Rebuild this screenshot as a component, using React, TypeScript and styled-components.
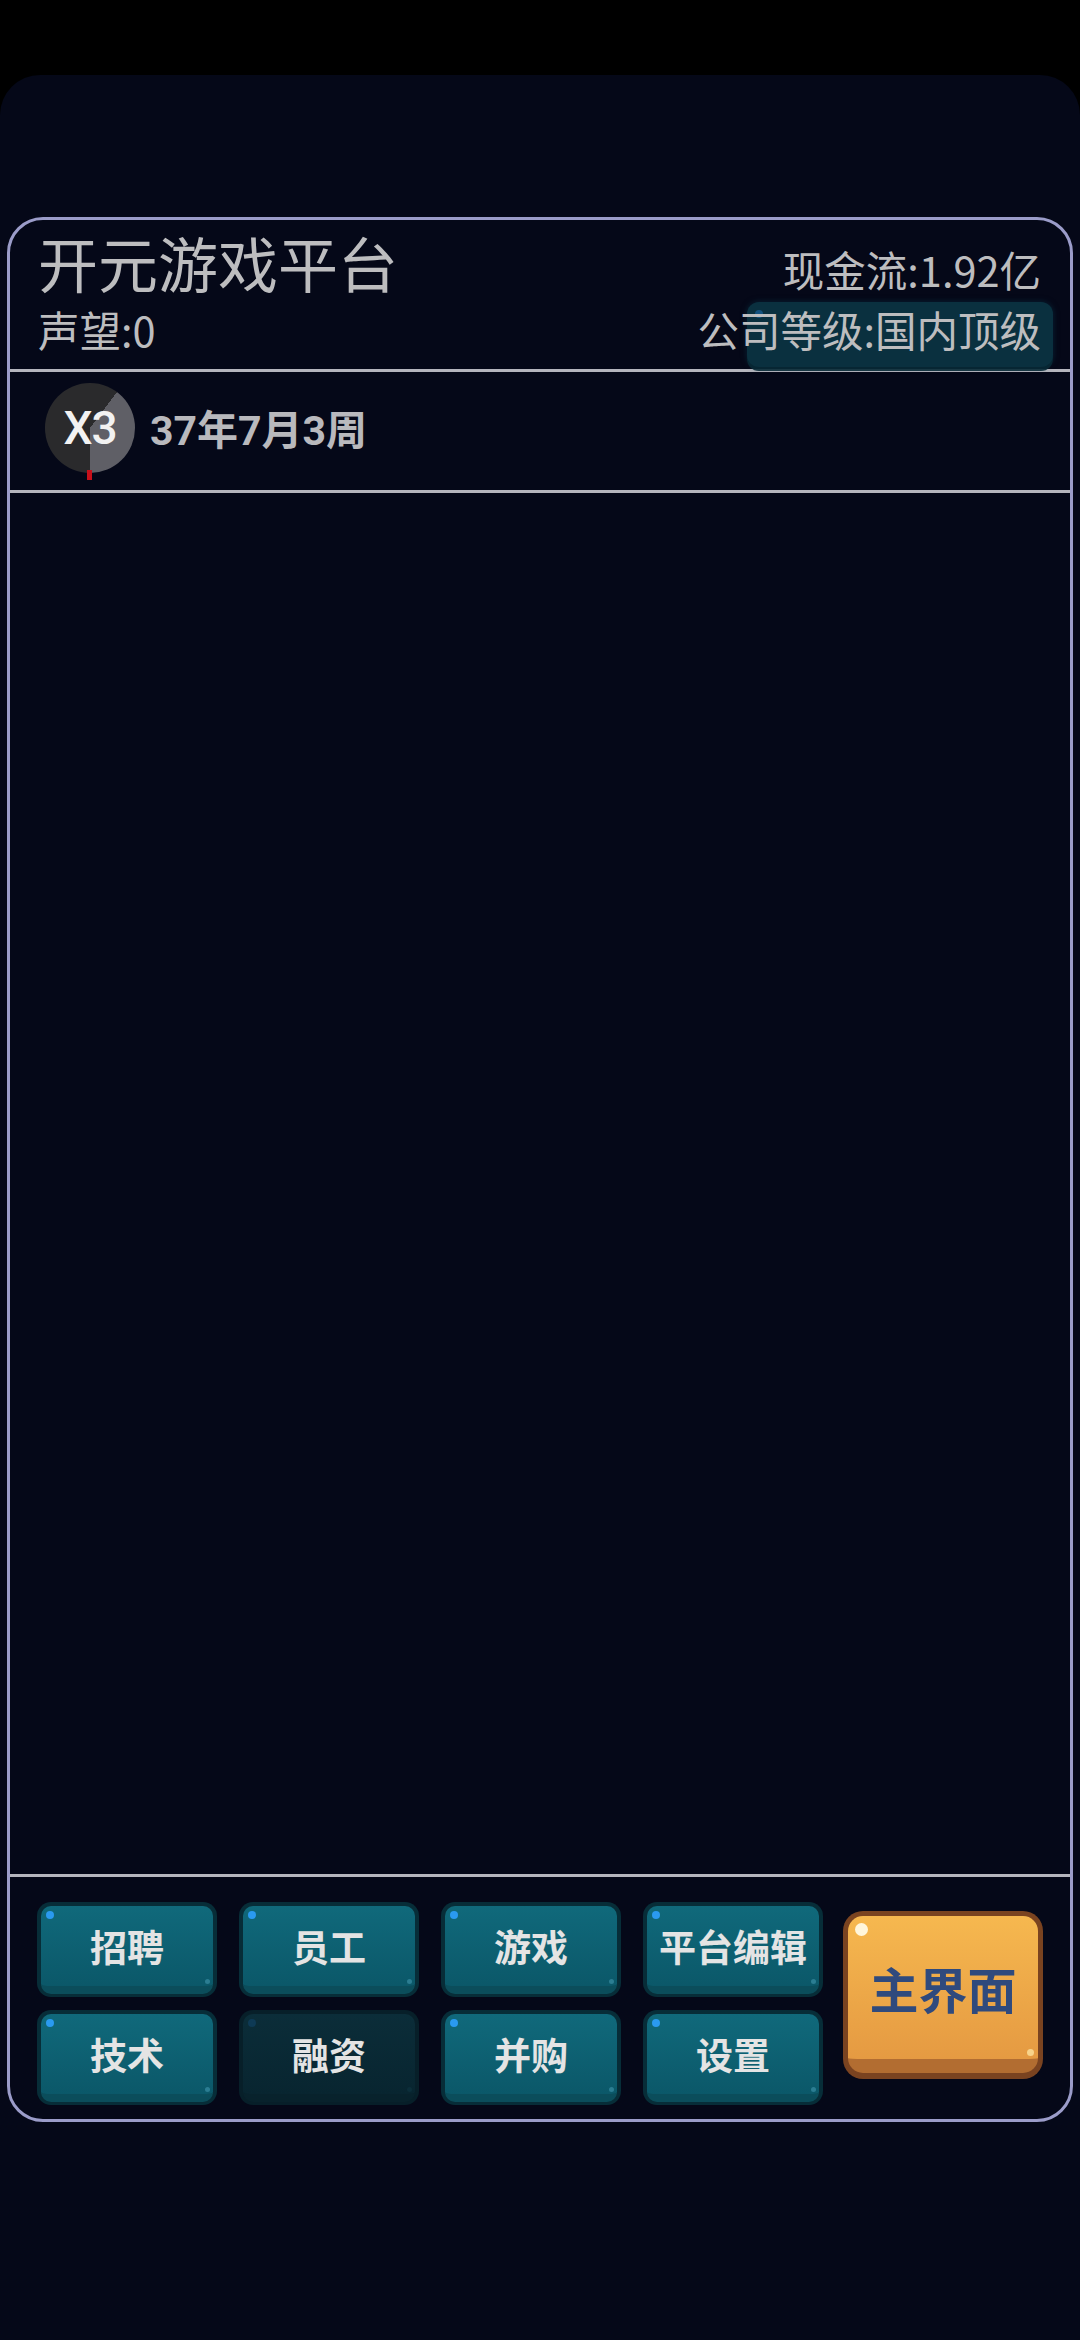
import React, { FC } from "react";
import styled, { createGlobalStyle } from "styled-components";

const GlobalStyle = createGlobalStyle`
  html, body {
    margin: 0;
    padding: 0;
    background: #000;
  }
  body {
    font-family: "Noto Sans CJK SC", "Noto Sans", sans-serif;
  }
`;

const Screen = styled.div`
  width: 1080px;
  min-height: 2340px;
  padding-top: 75px;
  box-sizing: border-box;
  background: #000;
`;

const Frame = styled.div`
  min-height: 2265px;
  box-sizing: border-box;
  background: #050818;
  border-radius: 40px 40px 0 0;
  padding: 142px 7px 0;
`;

const Panel = styled.div`
  height: 1905px;
  box-sizing: border-box;
  border: 3px solid #9b9cc9;
  border-radius: 36px;
  display: flex;
  flex-direction: column;
  overflow: hidden;
`;

const Header = styled.div`
  height: 149px;
  box-sizing: border-box;
  padding: 7px 29px 0 28px;
`;

const HeaderRow = styled.div<{ $height: number; $gap?: number }>`
  display: flex;
  justify-content: space-between;
  align-items: flex-end;
  height: ${({ $height }) => $height}px;
  margin-top: ${({ $gap }) => $gap ?? 0}px;
`;

const Title = styled.div`
  font-family: "Noto Sans CJK SC", sans-serif;
  font-size: 60px;
  line-height: 70px;
  height: 70px;
  color: #bdbdbf;
`;

const Stat = styled.div<{ $lift?: number }>`
  position: relative;
  font-family: "Noto Sans CJK SC", sans-serif;
  font-size: 41.5px;
  line-height: 48px;
  height: 48px;
  margin-bottom: ${({ $lift }) => $lift ?? 0}px;
  color: #bdbdbf;
  white-space: nowrap;
`;

const StatText = styled.span`
  position: relative;
  z-index: 1;
`;

/* faded button ghost sitting behind the company level */
const GhostButton = styled.div`
  position: absolute;
  left: 50px;
  right: -12px;
  top: -3px;
  bottom: -14px;
  border-radius: 12px;
  background: #0b3544;
  box-shadow: 0 4px 0 #082a36, 0 0 6px rgba(10, 60, 80, 0.6);
  opacity: 0.9;
  &::before {
    content: "";
    position: absolute;
    left: 8px;
    top: 8px;
    width: 8px;
    height: 8px;
    border-radius: 50%;
    background: #155a8a;
  }
`;

const Divider = styled.div`
  height: 3px;
  flex-shrink: 0;
  background: #b5b5bd;
`;

const TimeRow = styled.div`
  height: 118px;
  box-sizing: border-box;
  display: flex;
  align-items: center;
  gap: 15px;
  padding: 0 0 6px 35px;
`;

const SpeedDial = styled.div`
  position: relative;
  width: 90px;
  height: 90px;
  border-radius: 50%;
  background: conic-gradient(
    #2a2a2c 0deg 37deg,
    #5f5f66 37deg 180deg,
    #2a2a2c 180deg 360deg
  );
  display: flex;
  align-items: center;
  justify-content: center;
  font-family: Roboto, "Liberation Sans", sans-serif;
  font-size: 46px;
  font-weight: 500;
  color: #f2f2f2;
  letter-spacing: -1px;
  &::after {
    content: "";
    position: absolute;
    left: 42px;
    bottom: -7px;
    width: 5px;
    height: 10px;
    background: #c8101a;
  }
`;

const DateText = styled.div`
  font-family: Roboto, "Noto Sans CJK SC", sans-serif;
  font-weight: 700;
  font-size: 41px;
  line-height: 48px;
  color: #b9b9bd;
  margin-top: 6px;
`;

const Content = styled.div`
  flex: 1;
`;

const Footer = styled.div`
  display: flex;
  gap: 20px;
  padding: 25px 27px 14px 27px;
`;

const ButtonGrid = styled.div`
  display: grid;
  grid-template-columns: repeat(4, 180px);
  grid-auto-rows: 95px;
  column-gap: 22px;
  row-gap: 13px;
`;

const TealButton = styled.div<{ $disabled?: boolean }>`
  position: relative;
  box-sizing: border-box;
  padding: 4px 4px 3px;
  border-radius: 14px;
  background: ${({ $disabled }) => ($disabled ? "#071f29" : "#072d38")};
`;

const TealFace = styled.div<{ $disabled?: boolean }>`
  position: relative;
  height: 100%;
  box-sizing: border-box;
  border-radius: 10px;
  border-bottom: 8px solid ${({ $disabled }) => ($disabled ? "#08222c" : "#0b4d5b")};
  background: ${({ $disabled }) =>
    $disabled
      ? "linear-gradient(180deg, #0b2d39 0%, #082530 100%)"
      : "linear-gradient(180deg, #10697b 0%, #0b5869 100%)"};
  display: flex;
  align-items: center;
  justify-content: center;
  font-family: "Noto Sans CJK SC", sans-serif;
  font-weight: 700;
  font-size: 37px;
  color: #e4e4e4;
  &::before {
    content: "";
    position: absolute;
    left: 5px;
    top: 5px;
    width: 8px;
    height: 8px;
    border-radius: 50%;
    background: ${({ $disabled }) => ($disabled ? "#0e3a55" : "#2a9af0")};
  }
  &::after {
    content: "";
    position: absolute;
    right: 3px;
    bottom: 2px;
    width: 5px;
    height: 5px;
    border-radius: 50%;
    background: ${({ $disabled }) => ($disabled ? "#0c2e3a" : "#2b7d92")};
  }
`;

const MainButton = styled.div`
  width: 200px;
  height: 168px;
  margin-top: 9px;
  box-sizing: border-box;
  padding: 5px 5px 6px;
  border-radius: 20px;
  background: #7a4320;
`;

const MainFace = styled.div`
  position: relative;
  height: 100%;
  box-sizing: border-box;
  border-radius: 15px;
  border-bottom: 14px solid #b26d31;
  background: linear-gradient(180deg, #f6b84f 0%, #e59a42 100%);
  display: flex;
  align-items: center;
  justify-content: center;
  font-family: "Noto Sans CJK SC", sans-serif;
  font-weight: 700;
  font-size: 49px;
  color: #2f4a7d;
  &::before {
    content: "";
    position: absolute;
    left: 7px;
    top: 7px;
    width: 13px;
    height: 13px;
    border-radius: 50%;
    background: #fff6dc;
  }
  &::after {
    content: "";
    position: absolute;
    right: 4px;
    bottom: 3px;
    width: 7px;
    height: 7px;
    border-radius: 50%;
    background: #f8d38a;
  }
`;

const buttons = [
  { label: "招聘" },
  { label: "员工" },
  { label: "游戏" },
  { label: "平台编辑" },
  { label: "技术" },
  { label: "融资", disabled: true },
  { label: "并购" },
  { label: "设置" },
];

const App: FC = () => {
  return (
    <Screen>
      <GlobalStyle />
      <Frame>
        <Panel>
          <Header>
            <HeaderRow $height={70}>
              <Title>开元游戏平台</Title>
              <Stat $lift={4}>现金流:1.92亿</Stat>
            </HeaderRow>
            <HeaderRow $height={48} $gap={8}>
              <Stat>声望:0</Stat>
              <Stat>
                <GhostButton />
                <StatText>公司等级:国内顶级</StatText>
              </Stat>
            </HeaderRow>
          </Header>
          <Divider />
          <TimeRow>
            <SpeedDial>X3</SpeedDial>
            <DateText>37年7月3周</DateText>
          </TimeRow>
          <Divider />
          <Content />
          <Divider />
          <Footer>
            <ButtonGrid>
              {buttons.map((b) => (
                <TealButton key={b.label} $disabled={b.disabled}>
                  <TealFace $disabled={b.disabled}>{b.label}</TealFace>
                </TealButton>
              ))}
            </ButtonGrid>
            <MainButton>
              <MainFace>主界面</MainFace>
            </MainButton>
          </Footer>
        </Panel>
      </Frame>
    </Screen>
  );
};

export default App;
